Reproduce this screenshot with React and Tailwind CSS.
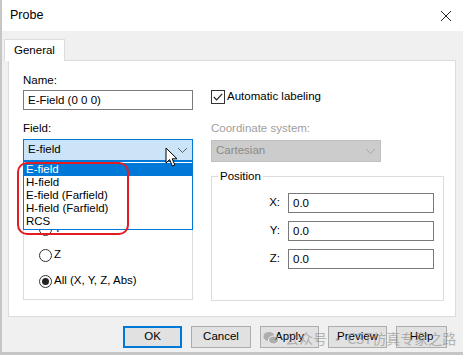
import { useState } from 'react';

function Chevron({ color = '#606060' }) {
  return (
    <svg width="11" height="7" viewBox="0 0 11 7" className="shrink-0">
      <path d="M1 1 L5.5 5.5 L10 1" fill="none" stroke={color} strokeWidth="1" />
    </svg>
  );
}

function Radio({ label, checked }) {
  return (
    <div className="flex items-center h-[16px] gap-[2px]">
      <span className="w-[13px] h-[13px] rounded-full border border-[#333] bg-white flex items-center justify-center">
        {checked && <span className="w-[7px] h-[7px] rounded-full bg-[#222]" />}
      </span>
      <span>{label}</span>
    </div>
  );
}

function CoordRow({ axis }) {
  return (
    <div className="flex items-center justify-end gap-[8px] pr-[9px]">
      <span>{axis}:</span>
      <div className="w-[146px] h-[20px] border border-[#7a7a7a] bg-white pl-[4px] leading-[18px]">0.0</div>
    </div>
  );
}

export default function App() {
  const [field] = useState('E-field');
  const options = ['E-field', 'H-field', 'E-field (Farfield)', 'H-field (Farfield)', 'RCS'];

  return (
    <div className="relative w-[463px] h-[355px] overflow-hidden bg-[#f0f0f0] border-l-2 border-b-[3px] border-[#c6c6c6] text-[11.5px] text-black font-['Liberation_Sans',Arial,sans-serif]">
      {/* Title bar */}
      <div className="h-[31px] bg-white flex items-center justify-between pl-[8px] pr-[11px]">
        <span className="text-[12.5px]">Probe</span>
        <svg width="12" height="12" viewBox="0 0 12 12">
          <path d="M1 1 L11 11 M11 1 L1 11" stroke="#222" strokeWidth="1" />
        </svg>
      </div>

      {/* Tab strip */}
      <div className="pt-[8px] pl-[2px]">
        <div className="relative z-10 -mb-px inline-flex items-center h-[22px] px-[9px] bg-white border border-b-0 border-[#dcdcdc]">
          General
        </div>
      </div>

      {/* Tab page */}
      <div className="ml-[6px] w-[448px] h-[257px] bg-white border border-[#dcdcdc] flex pl-[14px] pt-[11px]">
        {/* Left column */}
        <div className="w-[170px] flex flex-col">
          <div className="h-[16px] leading-[16px]">Name:</div>
          <div className="mt-[2px] h-[20px] border border-[#7a7a7a] pl-[4px] leading-[18px]">E-Field (0 0 0)</div>
          <div className="mt-[10px] h-[16px] leading-[16px]">Field:</div>
          <div className="relative z-20 mt-[3px]">
            <div className="h-[22px] bg-[#cce4f7] border border-[#0078d7] flex items-center justify-between pl-[4px] pr-[4px]">
              <span>{field}</span>
              <Chevron />
            </div>
            <div className="absolute top-full left-0 w-full bg-white border border-[#0078d7] py-[1px]">
              {options.map((o, i) => (
                <div
                  key={o}
                  className={
                    i === 0
                      ? 'h-[13px] leading-[13px] pl-[2px] bg-[#0078d7] text-white'
                      : 'h-[13px] leading-[13px] pl-[2px]'
                  }
                >
                  {o}
                </div>
              ))}
            </div>
          </div>
          <fieldset className="mt-[6px] h-[133px] border border-[#dcdcdc] pl-[15px]">
            <legend className="ml-[6px] px-[2px] leading-[16px]">Component</legend>
            <div className="mt-[12px] flex flex-col gap-[10px]">
              <Radio label="X" />
              <Radio label="Y" />
              <Radio label="Z" />
              <Radio label="All (X, Y, Z, Abs)" checked />
            </div>
          </fieldset>
        </div>

        {/* Right column */}
        <div className="w-[233px] ml-[18px] flex flex-col">
          <div className="mt-[17px] h-[16px] flex items-center gap-[2px]">
            <span className="w-[14px] h-[14px] border border-[#333] flex items-center justify-center">
              <svg width="10" height="8" viewBox="0 0 10 8">
                <path d="M0.8 4 L3.6 6.8 L9.2 0.8" fill="none" stroke="#222" strokeWidth="1.2" />
              </svg>
            </span>
            <span>Automatic labeling</span>
          </div>
          <div className="mt-[15px] h-[16px] leading-[16px] text-[#a0a0a0]">Coordinate system:</div>
          <div className="mt-[4px] w-[170px] h-[22px] bg-[#cccccc] border border-[#bfbfbf] flex items-center justify-between pl-[4px] pr-[4px] text-[#8a8a8a]">
            <span>Cartesian</span>
            <Chevron color="#a8a8a8" />
          </div>
          <fieldset className="mt-[6px] h-[133px] border border-[#dcdcdc]">
            <legend className="ml-[6px] px-[2px] leading-[16px]">Position</legend>
            <div className="mt-[9px] flex flex-col gap-[8px]">
              <CoordRow axis="X" />
              <CoordRow axis="Y" />
              <CoordRow axis="Z" />
            </div>
          </fieldset>
        </div>
      </div>

      {/* Buttons */}
      <div className="mt-[9px] flex pl-[121px] gap-[9px]">
        <button className="w-[59px] h-[22px] bg-[#e1e1e1] border-2 border-[#0078d7]">OK</button>
        <button className="w-[60px] h-[22px] bg-[#e1e1e1] border border-[#adadad]">Cancel</button>
        <button className="w-[59px] h-[22px] bg-[#e1e1e1] border border-[#adadad]">Apply</button>
        <button className="w-[59px] h-[22px] bg-[#e1e1e1] border border-[#adadad]">Preview</button>
        <button className="w-[51px] h-[22px] bg-[#e1e1e1] border border-[#adadad]">Help</button>
      </div>

      {/* Red annotation */}
      <div className="absolute left-[15px] top-[162px] w-[112px] h-[73px] border-2 border-[#e31b23] rounded-[10px] z-30" />

      {/* Mouse cursor */}
      <svg className="absolute left-[163px] top-[147px] z-30" width="14" height="21" viewBox="0 0 14 21">
        <path d="M1 1 L1 16 L4.6 12.6 L7.4 19 L9.8 18 L7.2 11.8 L12 11.8 Z" fill="#fff" stroke="#000" strokeWidth="1" strokeLinejoin="round" />
      </svg>

      {/* Watermark */}
      <div className="absolute left-[261px] top-[329px] z-30 flex items-center gap-[6px] whitespace-nowrap text-[#8c8c8c] opacity-60 pointer-events-none">
        <svg width="16" height="14" viewBox="0 0 16 14">
          <ellipse cx="6" cy="5.5" rx="5.5" ry="4.5" fill="#8c8c8c" />
          <ellipse cx="10.5" cy="9" rx="5" ry="4" fill="#8c8c8c" stroke="#fff" strokeWidth="1" />
        </svg>
        <span className="text-[14px] leading-[18px] font-['Noto_Sans_CJK_SC',sans-serif]">公众号 · CST仿真专家之路</span>
      </div>
    </div>
  );
}
